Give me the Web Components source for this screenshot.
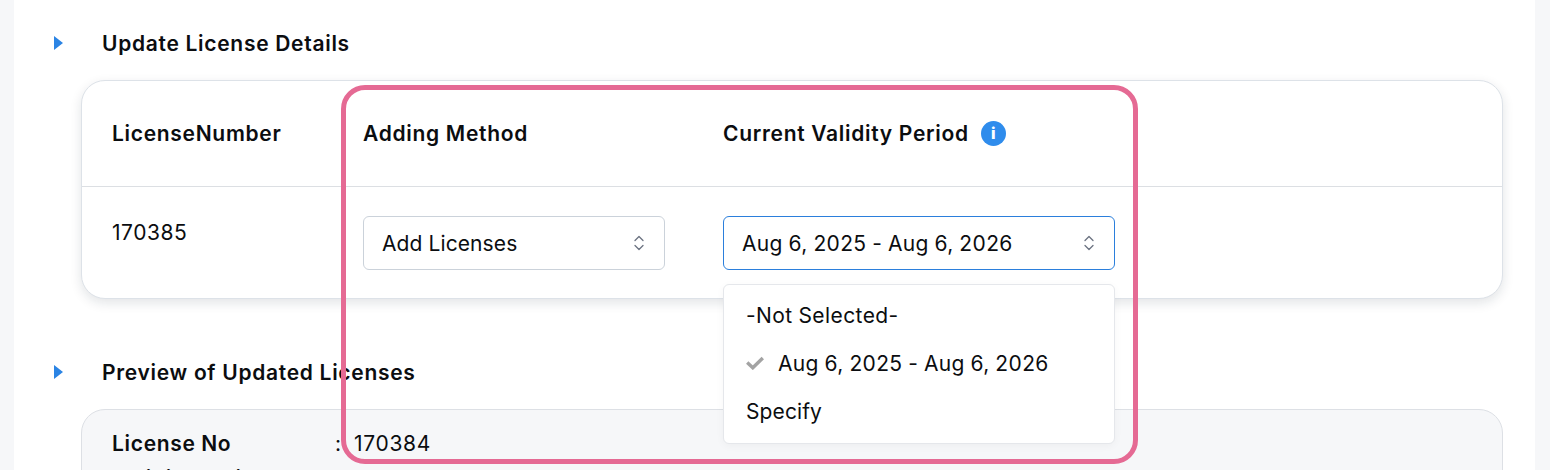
<!DOCTYPE html>
<html><head><meta charset="utf-8"><style>
html,body{margin:0;padding:0;height:470px;overflow:hidden;background:#f6f7f9}
body{font-family:Inter,"Liberation Sans",sans-serif}
</style></head><body>
<lic-page>
  <lic-section heading="Update License Details">
    <lic-table></lic-table>
  </lic-section>
  <lic-section heading="Preview of Updated Licenses" class="second">
    <lic-preview></lic-preview>
  </lic-section>
  <lic-menu></lic-menu>
  <lic-highlight></lic-highlight>
</lic-page>
<script>
function def(name,html,init){customElements.define(name,class extends HTMLElement{constructor(){super();this.attachShadow({mode:'open'}).innerHTML=html;}connectedCallback(){init&&init(this)}})}
const chev='<svg width="12" height="18" viewBox="0 0 12 18" fill="none" stroke="#6b7280" stroke-width="1.3" stroke-linecap="round" stroke-linejoin="round"><path d="M2 6.5 6 2.5l4 4M2 11.5l4 4 4-4"/></svg>';
const BODY='font-size:21px;letter-spacing:.35px;word-spacing:-.5px;font-weight:400;';
const BOLD='font-size:21px;letter-spacing:.7px;font-weight:600;';
def('lic-page',`<style>:host{display:block;box-sizing:border-box;width:1521px;height:470px;margin-left:14px;background:#fff;position:relative;overflow:hidden;padding:25px 32px 0 38px;color:#0b0d10}</style><slot></slot>`);
def('lic-section',`<style>:host{display:block}
.h{display:flex;align-items:center;height:36px;${BOLD}margin-bottom:19px}
.t{width:0;height:0;border-left:9px solid #2b84e4;border-top:7.5px solid transparent;border-bottom:7.5px solid transparent;margin:0 39px 0 2px}
:host(.second){margin-top:55px}
:host(.second) .h{margin-bottom:19px}
</style><div class="h"><span class="t"></span><span id="x"></span></div><slot></slot>`,el=>{el.shadowRoot.getElementById('x').textContent=el.getAttribute('heading')});
def('lic-select',`<style>:host{display:flex;box-sizing:border-box;height:54px;align-items:center;justify-content:space-between;padding:0 19px 0 18px;border:1px solid #cbd2da;border-radius:6px;${BODY}background:#fff}
:host(.open){border-color:#2b7fdc}svg{display:block}</style><slot></slot>${chev}`);
def('lic-table',`<style>:host{display:block;margin-left:29px;height:219px;box-sizing:border-box;border:1px solid #dde2e8;border-radius:24px;box-shadow:0 4px 12px rgba(20,30,50,.12);background:#fff}
.row{display:grid;grid-template-columns:251px 360px 1fr;padding-left:30px}
.head{height:105px;align-items:center;border-bottom:1px solid #dcdfe3;${BOLD}}
.body{padding-top:29px;${BODY}}
.cell{display:flex;align-items:center;gap:12px}
.num{padding-top:4px;letter-spacing:.55px}
.info{width:25px;height:25px;border-radius:50%;background:#2f8cec;color:#fff;font:800 16px/25px Inter,sans-serif;text-align:center;letter-spacing:0}
.a{width:302px;letter-spacing:.1px;word-spacing:0}.b{width:392px}
</style><div class="row head"><div>LicenseNumber</div><div>Adding Method</div><div class="cell"><span>Current Validity Period</span><span class="info">i</span></div></div>
<div class="row body"><div class="num">170385</div><lic-select class="a">Add Licenses</lic-select><div><lic-select class="b open">Aug 6, 2025 - Aug 6, 2026</lic-select></div></div>`);
def('lic-preview',`<style>:host{display:block;margin-left:29px;height:200px;box-sizing:border-box;border:1px solid #dde0e5;border-radius:24px;background:#f6f7f9;padding:19px 30px;${BODY}}
.r{display:grid;grid-template-columns:223px 19px 1fr;height:28px;align-items:center}b{${BOLD}}.n{letter-spacing:.7px}</style>
<div class="r"><b>License No</b><span>:</span><span class="n">170384</span></div><div class="r" style="margin-top:7px"><b>Validity Period</b><span>:</span><span></span></div>`);
def('lic-menu',`<style>:host{position:absolute;left:709px;top:284px;width:392px;height:160px;box-sizing:border-box;background:#fff;border:1px solid #e5e7eb;border-radius:6px;box-shadow:0 2px 8px rgba(0,0,0,.04);padding:6px 22px;${BODY}color:#0b0d10}
.i{height:48px;display:flex;align-items:center;gap:14px}svg{display:block}.s{letter-spacing:.1px}.ns{letter-spacing:.42px}</style>
<div class="i ns">-Not Selected-</div>
<div class="i"><svg width="18" height="14" viewBox="0 0 18 14" fill="none" stroke="#a3a3a3" stroke-width="3.4"><path d="M1.2 6.6 6.8 11.8 16.8 2"/></svg><span>Aug 6, 2025 - Aug 6, 2026</span></div>
<div class="i s">Specify</div>`);
def('lic-highlight',`<style>:host{position:absolute;left:327px;top:85px;width:797px;height:379px;box-sizing:border-box;border:5px solid #e56a94;border-radius:24px;pointer-events:none}</style>`);
</script></body></html>
